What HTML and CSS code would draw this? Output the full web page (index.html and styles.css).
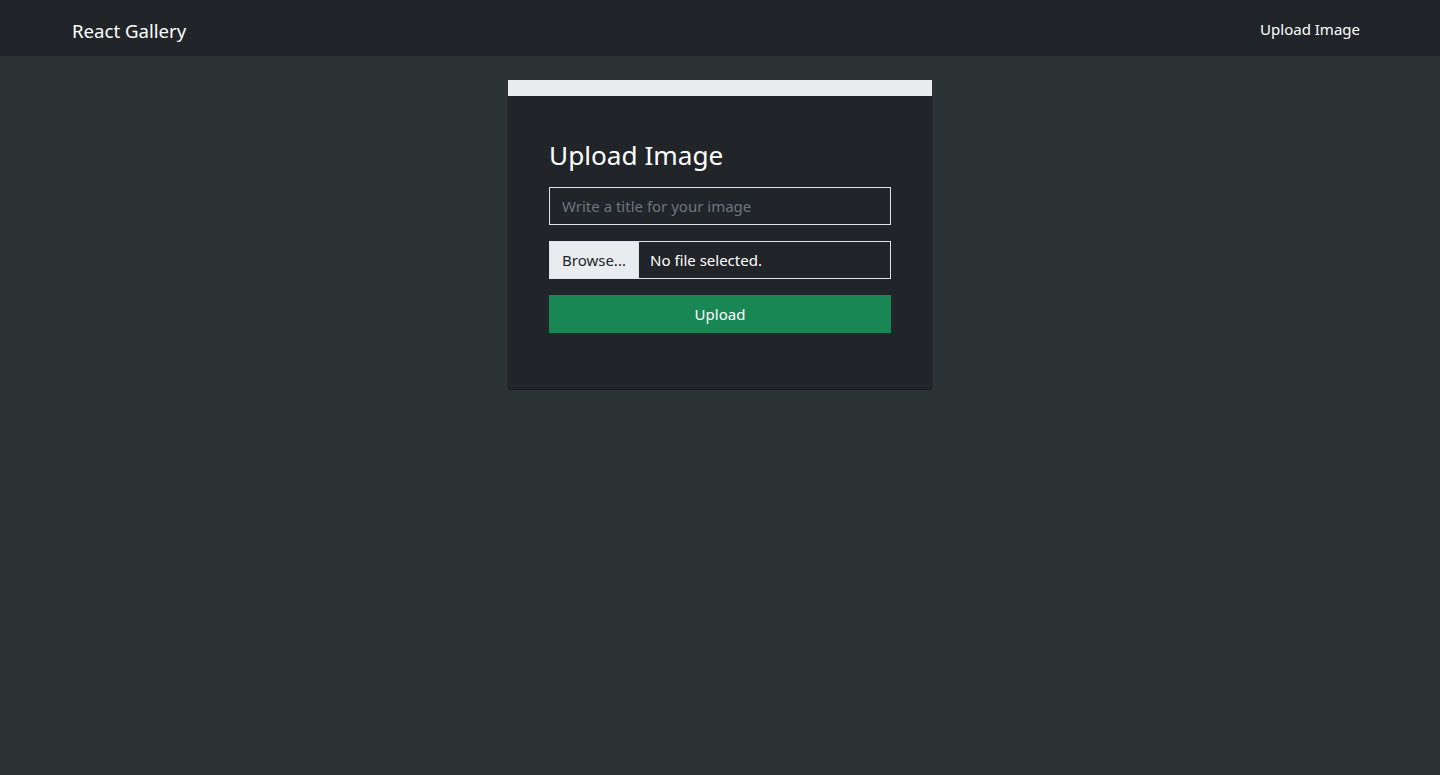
FILE: index.html
```html
<!DOCTYPE html>
<html lang="en">
<head>
<meta charset="utf-8">
<title>React Gallery</title>
<link rel="stylesheet" href="styles.css">
</head>
<body>
<nav class="navbar">
  <div class="nav-container">
    <a class="brand" href="#">React Gallery</a>
    <a class="nav-link" href="#">Upload Image</a>
  </div>
</nav>
<main class="main">
  <div class="card">
    <div class="card-top"></div>
    <div class="card-body">
      <h3 class="title">Upload Image</h3>
      <form class="form">
        <input class="text-input" type="text" placeholder="Write a title for your image">
        <div class="file-input">
          <span class="file-btn">Browse...</span>
          <span class="file-name">No file selected.</span>
        </div>
        <button class="upload-btn" type="button">Upload</button>
      </form>
    </div>
  </div>
</main>
</body>
</html>
```
FILE: styles.css
```css
* { box-sizing: border-box; }
html, body { margin: 0; padding: 0; }
body {
  background: #2c3335;
  font-family: "Noto Sans", "Open Sans", sans-serif;
  color: #fff;
  min-height: 775px;
}
.navbar {
  background: #212529;
  height: 56px;
}
.nav-container {
  max-width: 1320px;
  margin: 0 auto;
  padding: 0 12px;
  height: 56px;
  display: flex;
  align-items: center;
  justify-content: space-between;
}
.brand {
  color: #fff;
  text-decoration: none;
  font-size: 18.6px;
  margin-top: 4px;
}
.nav-link {
  color: #fff;
  text-decoration: none;
  font-size: 15px;
  padding: 0 8px;
  margin-top: 2px;
}
.main {
  display: flex;
  justify-content: center;
  padding-top: 24px;
}
.card {
  width: 424px;
  background: #212529;
  border: 1px solid #1d2023;
  border-top: none;
}
.card-top {
  height: 16px;
  background: #e9ecef;
  margin: 0 -1px;
}
.card-body {
  padding: 42px 40px 56px;
}
.title {
  margin: 0 0 14px;
  font-size: 26.2px;
  font-weight: 400;
  line-height: 35px;
}
.form {
  display: flex;
  flex-direction: column;
  gap: 16px;
}
.text-input {
  height: 38px;
  background: #212529;
  border: 1px solid #dee2e6;
  color: #fff;
  font-family: inherit;
  font-size: 15px;
  padding: 0 12px;
  outline: none;
  border-radius: 0;
}
.text-input::placeholder { color: #6c757d; }
.file-input {
  height: 38px;
  border: 1px solid #dee2e6;
  display: flex;
  align-items: stretch;
  font-size: 15px;
}
.file-btn {
  background: #e9ecef;
  color: #212529;
  padding: 0 12px;
  width: 89px;
  display: flex;
  align-items: center;
  border-right: 1px solid #dee2e6;
}
.file-name {
  display: flex;
  align-items: center;
  padding: 0 11px;
  color: #fff;
}
.upload-btn {
  height: 38px;
  background: #198754;
  border: none;
  color: #fff;
  font-family: inherit;
  font-size: 15px;
  border-radius: 0;
}
```
